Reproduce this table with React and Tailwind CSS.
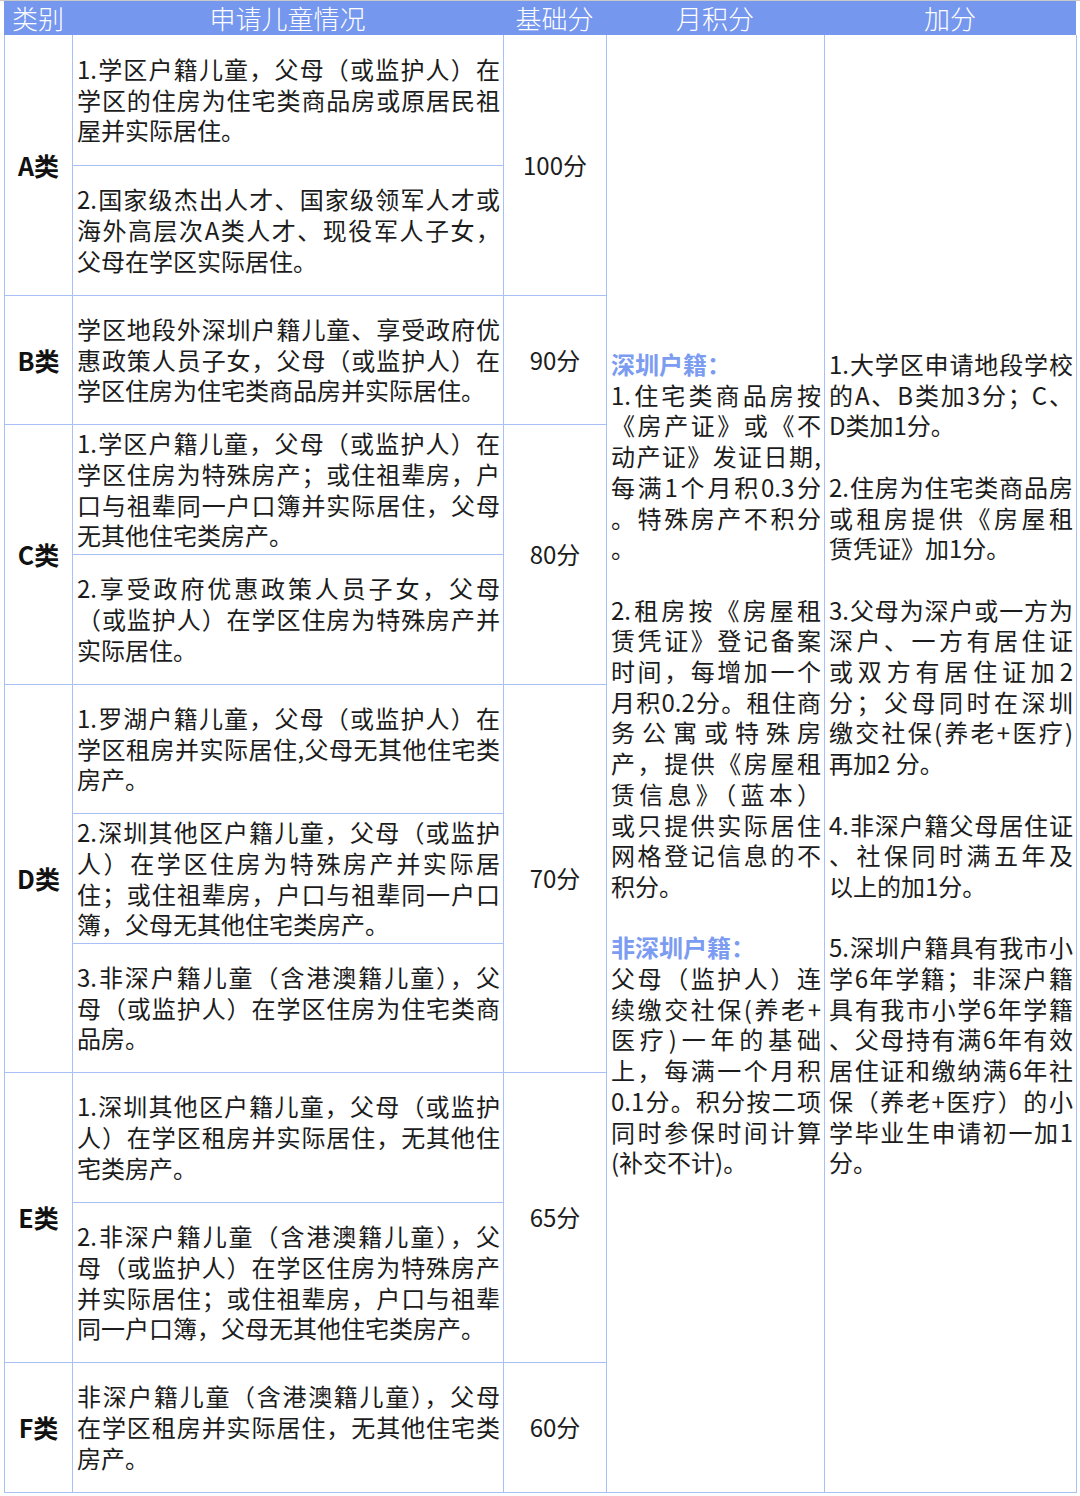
import React from "react";

const J = "text-justify [text-align-last:justify]";

function Para({ lines }) {
  return (
    <div>
      {lines.map((l, i) => (
        <div key={i} className={i < lines.length - 1 ? J : "whitespace-nowrap"}>
          {l}
        </div>
      ))}
    </div>
  );
}

function Blank() {
  return <div className="h-[30.7px]" />;
}

const cats = [
  { label: "A类", score: "100分", pos: "row-start-1 row-span-2" },
  { label: "B类", score: "90分", pos: "row-start-3 row-span-1" },
  { label: "C类", score: "80分", pos: "row-start-4 row-span-2" },
  { label: "D类", score: "70分", pos: "row-start-6 row-span-3" },
  { label: "E类", score: "65分", pos: "row-start-9 row-span-2" },
  { label: "F类", score: "60分", pos: "row-start-11 row-span-1" },
];

const cases = [
  { pos: "row-start-1", lines: ["1.学区户籍儿童，父母（或监护人）在", "学区的住房为住宅类商品房或原居民祖", "屋并实际居住。"] },
  { pos: "row-start-2", lines: ["2.国家级杰出人才、国家级领军人才或", "海外高层次A类人才、现役军人子女，", "父母在学区实际居住。"] },
  { pos: "row-start-3", lines: ["学区地段外深圳户籍儿童、享受政府优", "惠政策人员子女，父母（或监护人）在", "学区住房为住宅类商品房并实际居住。"] },
  { pos: "row-start-4", lines: ["1.学区户籍儿童，父母（或监护人）在", "学区住房为特殊房产；或住祖辈房，户", "口与祖辈同一户口簿并实际居住，父母", "无其他住宅类房产。"] },
  { pos: "row-start-5", lines: ["2.享受政府优惠政策人员子女，父母", "（或监护人）在学区住房为特殊房产并", "实际居住。"] },
  { pos: "row-start-6", lines: ["1.罗湖户籍儿童，父母（或监护人）在", "学区租房并实际居住,父母无其他住宅类", "房产。"] },
  { pos: "row-start-7", lines: ["2.深圳其他区户籍儿童，父母（或监护", "人）在学区住房为特殊房产并实际居", "住；或住祖辈房，户口与祖辈同一户口", "簿，父母无其他住宅类房产。"] },
  { pos: "row-start-8", lines: ["3.非深户籍儿童（含港澳籍儿童），父", "母（或监护人）在学区住房为住宅类商", "品房。"] },
  { pos: "row-start-9", lines: ["1.深圳其他区户籍儿童，父母（或监护", "人）在学区租房并实际居住，无其他住", "宅类房产。"] },
  { pos: "row-start-10", lines: ["2.非深户籍儿童（含港澳籍儿童），父", "母（或监护人）在学区住房为特殊房产", "并实际居住；或住祖辈房，户口与祖辈", "同一户口簿，父母无其他住宅类房产。"] },
  { pos: "row-start-11", lines: ["非深户籍儿童（含港澳籍儿童），父母", "在学区租房并实际居住，无其他住宅类", "房产。"] },
];

export default function App() {
  return (
    <div
      className="w-[1080px] h-[1496px] bg-white border-t border-[#c9c9c9] pl-[4px] text-[#1c1c1c]"
      style={{ fontFamily: '"Noto Sans CJK SC", "Noto Sans", sans-serif' }}
    >
      <div className="w-[1073px]">
        <div className="flex h-[34px] w-[1072px] bg-[#7597ee] text-white text-[26px] font-light leading-[34px]">
          <div className="w-[68px] text-center">类别</div>
          <div className="w-[431px] text-center">申请儿童情况</div>
          <div className="w-[103px] text-center">基础分</div>
          <div className="w-[218px] text-center">月积分</div>
          <div className="w-[252px] text-center">加分</div>
        </div>

        <div className="grid grid-cols-[67px_430px_102px_217px_251px] grid-rows-[130px_129px_128px_129px_129px_128px_129px_128px_129px_159px_129px] gap-px bg-[#a8c0f6] border-x border-b border-[#a8c0f6] text-[24px] leading-[30.7px]">
          {cats.map((c) => (
            <div
              key={c.label}
              className={`col-start-1 ${c.pos} bg-white flex items-center justify-center font-bold text-[25px] text-[#111]`}
            >
              {c.label}
            </div>
          ))}
          {cases.map((c, i) => (
            <div key={i} className={`col-start-2 ${c.pos} bg-white flex flex-col justify-center pl-[4px] pr-[3px]`}>
              <Para lines={c.lines} />
            </div>
          ))}
          {cats.map((c) => (
            <div
              key={c.score}
              className={`col-start-3 ${c.pos} bg-white flex items-center justify-center`}
            >
              {c.score}
            </div>
          ))}

          <div className="col-start-4 row-start-1 row-span-11 bg-white flex flex-col justify-center pl-[4px] pr-[3px]">
            <div className="font-bold text-[#7b9cf1]">深圳户籍：</div>
            <Para lines={["1.住宅类商品房按", "《房产证》或《不", "动产证》发证日期,", "每满1个月积0.3分", "。特殊房产不积分", "。"]} />
            <Blank />
            <Para lines={["2.租房按《房屋租", "赁凭证》登记备案", "时间，每增加一个", "月积0.2分。租住商", "务公寓或特殊房", "产，提供《房屋租", "赁信息》（蓝本）", "或只提供实际居住", "网格登记信息的不", "积分。"]} />
            <Blank />
            <div className="font-bold text-[#7b9cf1]">非深圳户籍：</div>
            <Para lines={["父母（监护人）连", "续缴交社保(养老+", "医疗)一年的基础", "上，每满一个月积", "0.1分。积分按二项", "同时参保时间计算", "(补交不计)。"]} />
          </div>

          <div className="col-start-5 row-start-1 row-span-11 bg-white flex flex-col justify-center pl-[4px] pr-[3px]">
            <Para lines={["1.大学区申请地段学校", "的A、B类加3分；C、", "D类加1分。"]} />
            <Blank />
            <Para lines={["2.住房为住宅类商品房", "或租房提供《房屋租", "赁凭证》加1分。"]} />
            <Blank />
            <Para lines={["3.父母为深户或一方为", "深户、一方有居住证", "或双方有居住证加2", "分；父母同时在深圳", "缴交社保(养老+医疗)", "再加2 分。"]} />
            <Blank />
            <Para lines={["4.非深户籍父母居住证", "、社保同时满五年及", "以上的加1分。"]} />
            <Blank />
            <Para lines={["5.深圳户籍具有我市小", "学6年学籍；非深户籍", "具有我市小学6年学籍", "、父母持有满6年有效", "居住证和缴纳满6年社", "保（养老+医疗）的小", "学毕业生申请初一加1", "分。"]} />
          </div>
        </div>
      </div>
    </div>
  );
}
